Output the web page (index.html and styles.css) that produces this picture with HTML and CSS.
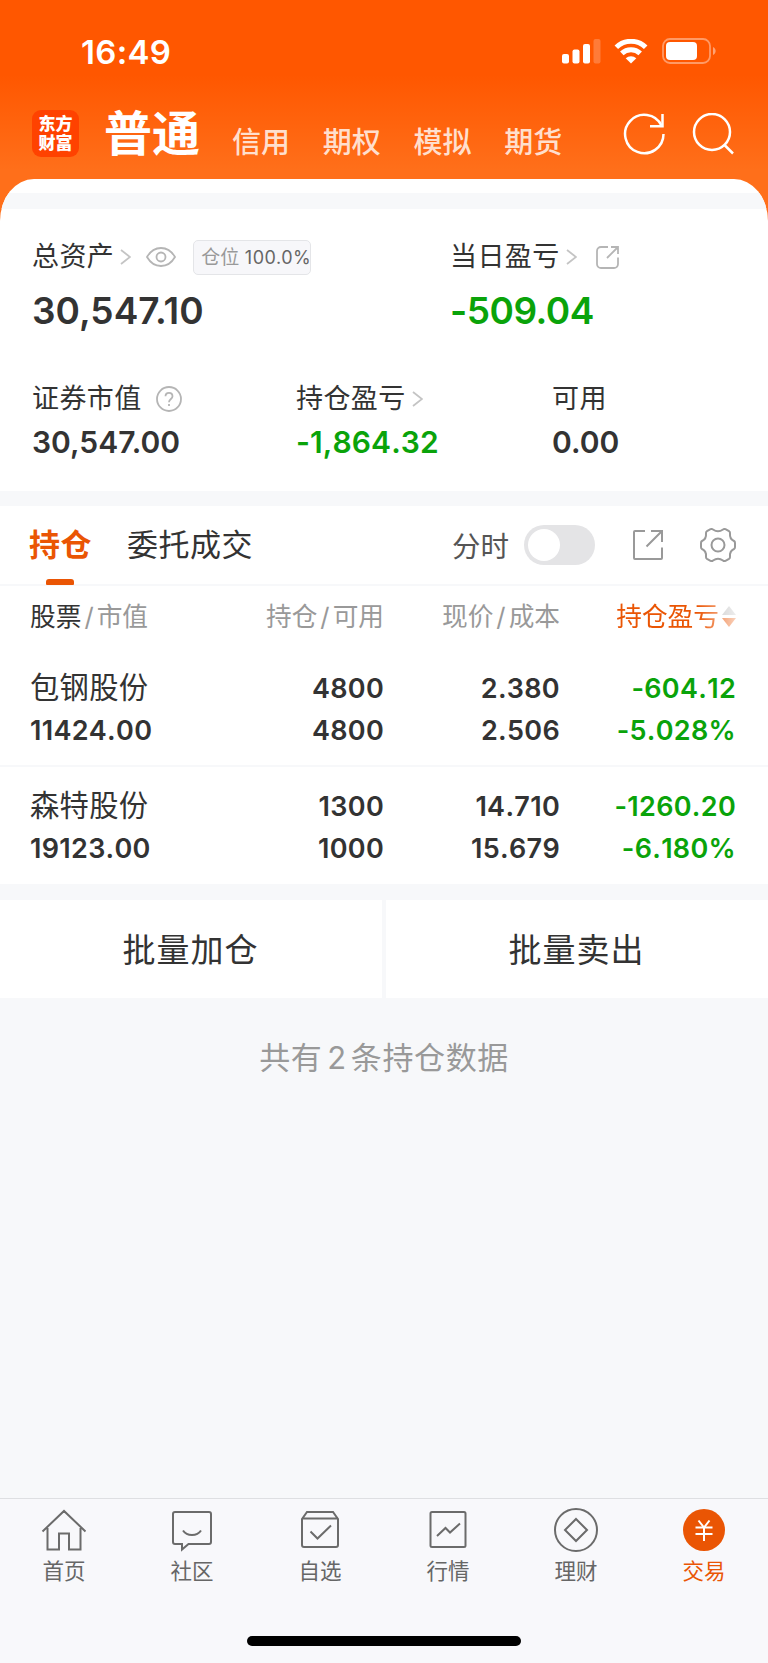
FILE: index.html
```
<!DOCTYPE html>
<html lang="zh-CN">
<head>
  <meta charset="UTF-8">
  <meta name="viewport" content="width=device-width, initial-scale=1.0">
  <title>东方财富 - 交易</title>
  <link rel="stylesheet" href="styles.css">
</head>
<body>
  <div class="app">
    <div class="status-bar">
      <span class="time">16:49</span>
      <div class="status-icons">
        <svg class="signal" width="39" height="25" viewBox="0 0 39 25" fill="#fff">
          <rect x="0" y="15" width="7" height="9.500" rx="2"/>
          <rect x="10.500" y="10.500" width="7" height="14" rx="2"/>
          <rect x="21" y="5" width="7" height="19.500" rx="2"/>
          <rect x="31.500" y="0" width="7" height="24.500" rx="2" opacity=".22"/>
        </svg>
        <svg class="wifi" width="34" height="25" viewBox="0 0 34 25" fill="none" stroke="#fff" stroke-width="5">
          <path d="M2.300 8.300a21 21 0 0 1 29.400 0"/>
          <path d="M7.800 14.400a13.200 13.200 0 0 1 18.400 0"/>
          <path d="M17 24.500l-5.300-5.200a7.600 7.600 0 0 1 10.600 0z" fill="#fff" stroke="none"/>
        </svg>
        <svg class="battery" width="54" height="26" viewBox="0 0 54 26">
          <rect x="1" y="1" width="47" height="24" rx="7" fill="none" stroke="#fff" stroke-width="1.800" opacity=".4"/>
          <rect x="4" y="4" width="31" height="18" rx="4" fill="#fff"/>
          <path d="M51 9c3.500 1.500 3.500 6.500 0 8z" fill="#fff" opacity=".45"/>
        </svg>
      </div>
    </div>

    <header class="nav">
      <div class="logo"><span>东方</span><span>财富</span></div>
      <h1>普通</h1>
      <nav class="nav-links">
        <a>信用</a>
        <a>期权</a>
        <a>模拟</a>
        <a>期货</a>
      </nav>
      <div class="nav-icons">
        <svg width="42" height="42" viewBox="0 0 42 42" fill="none" stroke="#fff" stroke-width="2.500">
          <path d="M40.500 21A19.200 19.200 0 1 1 38.500 12.500"/>
          <path d="M39.500 1v12.200H27"/>
        </svg>
        <svg width="42" height="42" viewBox="0 0 42 42" fill="none" stroke="#fff" stroke-width="2.500">
          <circle cx="20" cy="19" r="18"/>
          <path d="M32.500 32l8.500 8.500"/>
        </svg>
      </div>
    </header>

    <section class="assets">
      <div class="strip"></div>
      <div class="row row-main">
        <div class="item">
          <div class="label">
            <span>总资产</span>
            <svg class="chevron" width="11" height="16" viewBox="0 0 11 16"><path d="M1 1l9 7-9 7"/></svg>
            <svg class="eye" width="30" height="20" viewBox="0 0 30 20">
              <path d="M1 10C8-2 22-2 29 10C22 22 8 22 1 10z"/>
              <circle cx="15" cy="10" r="4.500"/>
            </svg>
            <span class="badge">仓位 <b>100.0%</b></span>
          </div>
          <div class="value">30,547.10</div>
        </div>
        <div class="item">
          <div class="label">
            <span>当日盈亏</span>
            <svg class="chevron" width="11" height="16" viewBox="0 0 11 16"><path d="M1 1l9 7-9 7"/></svg>
            <svg class="share-small" width="23" height="23" viewBox="0 0 23 23">
              <path d="M12 1H5a4 4 0 0 0-4 4v13a4 4 0 0 0 4 4h13a4 4 0 0 0 4-4v-6.500"/>
              <path d="M15 1h7v7M21.500 1.500L11 12"/>
            </svg>
          </div>
          <div class="value down">-509.04</div>
        </div>
      </div>
      <div class="row row-sub">
        <div class="item">
          <div class="label">
            <span>证券市值</span>
            <svg class="help" width="26" height="26" viewBox="0 0 26 26">
              <circle cx="13" cy="13" r="12"/>
              <path d="M9.500 10.300c0-4.600 7-4.600 7 0 0 2.700-3.500 2.700-3.500 6M13 18v2"/>
            </svg>
          </div>
          <div class="value">30,547.00</div>
        </div>
        <div class="item">
          <div class="label">
            <span>持仓盈亏</span>
            <svg class="chevron" width="11" height="16" viewBox="0 0 11 16"><path d="M1 1l9 7-9 7"/></svg>
          </div>
          <div class="value down">-1,864.32</div>
        </div>
        <div class="item">
          <div class="label"><span>可用</span></div>
          <div class="value">0.00</div>
        </div>
      </div>
    </section>

    <section class="positions">
      <div class="tabs">
        <a class="tab active">持仓</a>
        <a class="tab">委托成交</a>
        <div class="tools">
          <span>分时</span>
          <div class="switch"></div>
          <svg class="share" width="30" height="30" viewBox="0 0 30 30">
            <path d="M12 1H2a1 1 0 0 0-1 1v26a1 1 0 0 0 1 1h26a1 1 0 0 0 1-1V17.500"/>
            <path d="M18 1h11v11M28.500 1.500L13.500 16.500"/>
          </svg>
          <svg class="gear" width="36" height="36" viewBox="0 0 36 36">
            <path d="M13 2.500Q18 6 23 2.500Q24 1.500 25.500 2.200L29 4.200Q30.300 5 30 6.500Q29.500 12 34 14Q35 14.500 35 16V20Q35 21.500 34 22Q29.500 24 30 29.500Q30.300 31 29 31.800L25.500 33.800Q24 34.500 23 33.500Q18 30 13 33.500Q12 34.500 10.500 33.800L7 31.800Q5.700 31 6 29.500Q6.500 24 2 22Q1 21.500 1 20V16Q1 14.500 2 14Q6.500 12 6 6.500Q5.700 5 7 4.200L10.500 2.200Q12 1.500 13 2.500Z"/>
            <circle cx="18" cy="18" r="6.500"/>
          </svg>
        </div>
      </div>

      <div class="table">
        <div class="thead">
          <span><em>股票</em><i>/</i>市值</span>
          <span>持仓<i>/</i>可用</span>
          <span>现价<i>/</i>成本</span>
          <span class="sort">持仓盈亏
            <svg width="14" height="22" viewBox="0 0 14 22">
              <path d="M7 0l7 9H0z" fill="#bbb"/>
              <path d="M7 21l7-9H0z" fill="#ea5504"/>
            </svg>
          </span>
        </div>
        <div class="stock">
          <span class="name">包钢股份</span>
          <span>4800</span>
          <span>2.380</span>
          <span class="down">-604.12</span>
          <span>11424.00</span>
          <span>4800</span>
          <span>2.506</span>
          <span class="down">-5.028%</span>
        </div>
        <div class="stock">
          <span class="name">森特股份</span>
          <span>1300</span>
          <span>14.710</span>
          <span class="down">-1260.20</span>
          <span>19123.00</span>
          <span>1000</span>
          <span>15.679</span>
          <span class="down">-6.180%</span>
        </div>
      </div>
    </section>

    <div class="batch">
      <button>批量加仓</button>
      <button>批量卖出</button>
    </div>

    <p class="total">共有<span>2</span>条持仓数据</p>

    <footer class="tabbar">
      <div class="tabbar-items">
        <a>
          <svg width="46" height="46" viewBox="0 0 46 46">
            <path d="M1.500 24.500L23 4l21.500 20.500M6.500 21v21.500H18V26.500h10v16h11.500V21"/>
          </svg>
          <span>首页</span>
        </a>
        <a>
          <svg width="46" height="46" viewBox="0 0 46 46">
            <path d="M6 5h34a2 2 0 0 1 2 2v28a2 2 0 0 1-2 2H19.500L13 42.500V37H6a2 2 0 0 1-2-2V7a2 2 0 0 1 2-2z"/>
            <path d="M14 23.500c4 6 14 6 18 0"/>
          </svg>
          <span>社区</span>
        </a>
        <a>
          <svg width="46" height="46" viewBox="0 0 46 46">
            <path d="M5 12l5-7h26l5 7v26a2 2 0 0 1-2 2H7a2 2 0 0 1-2-2zM5 11.500h36"/>
            <path d="M13.500 24.500l7 7L34 18.500"/>
          </svg>
          <span>自选</span>
        </a>
        <a>
          <svg width="46" height="46" viewBox="0 0 46 46">
            <rect x="5.500" y="5" width="35" height="35" rx="1.500"/>
            <path d="M12 29l8.500-8 4.500 4.500 10-9"/>
          </svg>
          <span>行情</span>
        </a>
        <a>
          <svg width="46" height="46" viewBox="0 0 46 46">
            <circle cx="23" cy="23" r="21"/>
            <path d="M23 12l11 11-11 11-11-11z"/>
          </svg>
          <span>理财</span>
        </a>
        <a class="current">
          <svg width="46" height="46" viewBox="0 0 46 46">
            <circle class="disc" cx="23" cy="23" r="21"/>
            <path class="yen" d="M17.500 13.500L23 20.500l5.500-7M23 20.500V34M14.500 20.500h17M14.500 27h17"/>
          </svg>
          <span>交易</span>
        </a>
      </div>
      <div class="home-indicator"></div>
    </footer>
  </div>
</body>
</html>
```

FILE: styles.css
```
* {
  box-sizing: border-box;
}

body {
  margin: 0;
  font-family: Inter, "Noto Sans CJK SC", sans-serif;
  color: #333;
}

.app {
  display: flex;
  flex-direction: column;
  height: 1663px;
  background: linear-gradient(#ff5700 0, #ff5700 75px, #ff6f1a 170px, #ff6f1a 100%) no-repeat 0 0 / 100% 240px #f7f8fa;
}

svg {
  display: block;
  flex: none;
}

/* status bar */
.status-bar {
  display: flex;
  justify-content: space-between;
  height: 102px;
  padding: 31px 52px 0 81px;
}

.time {
  font-size: 33px;
  font-weight: 600;
  letter-spacing: .3px;
  line-height: 42px;
  color: #fff;
}

.status-icons {
  display: flex;
  align-items: flex-start;
  padding-top: 8px;
}

.wifi {
  margin: 0 14px 0 13px;
}

.battery {
  margin-top: -1px;
}

/* header */
.nav {
  display: flex;
  height: 77px;
  padding: 0 34px 0 32px;
}

.logo {
  display: flex;
  flex-direction: column;
  align-items: center;
  justify-content: center;
  width: 47px;
  height: 47px;
  margin-top: 8px;
  border-radius: 9px;
  background: #ff4200;
  color: #fff;
  font-size: 17px;
  font-weight: 900;
  line-height: 19px;
}

.nav h1 {
  margin: 0 0 0 25px;
  font-size: 48px;
  font-weight: 700;
  line-height: 64px;
  color: #fff;
}

.nav-links {
  display: flex;
  gap: 32.7px;
  margin-left: 32px;
  font-size: 29px;
  font-weight: 500;
  line-height: 81px;
  color: #ffdfcd;
}

.nav-icons {
  display: flex;
  gap: 27px;
  margin: 11px 0 0 auto;
}

/* assets */
.assets {
  height: 312px;
  border-radius: 34px 34px 0 0 / 42px 42px 0 0;
  background: #fff;
  overflow: hidden;
}

.strip {
  height: 16px;
  margin-top: 14px;
  background: #f7f8fa;
}

.row {
  display: grid;
  padding-left: 32px;
}

.row-main {
  grid-template-columns: 418px 1fr;
  padding-top: 28px;
}

.row-sub {
  grid-template-columns: 264px 256px 1fr;
  padding-top: 45px;
}

.label {
  display: flex;
  align-items: center;
  height: 40px;
  font-size: 27px;
  line-height: 40px;
  letter-spacing: .4px;
}

.label svg {
  fill: none;
  stroke: #b5b5b5;
  stroke-width: 1.8;
}

.label .chevron {
  margin-left: 6px;
  stroke: #c4c4c4;
}

.label .eye {
  margin-left: 15px;
}

.label .share-small {
  margin-left: 19px;
}

.label .help {
  margin-left: 14px;
}

.badge {
  height: 35px;
  width: 118px;
  margin-left: 17px;
  padding-left: 7px;
  border: 1px solid #e4e5e8;
  border-radius: 5px;
  background: #f7f7fa;
  color: #999;
  font-size: 19px;
  line-height: 33px;
  letter-spacing: .1px;
  white-space: nowrap;
}

.badge b {
  font-size: 18px;
  font-weight: 400;
  letter-spacing: .5px;
  color: #666;
}

.value {
  font-weight: 600;
}

.row-main .value {
  font-size: 37px;
  line-height: 46px;
  margin-top: 11px;
}

.row-main .down {
  letter-spacing: -.5px;
}

.row-sub .value {
  font-size: 30px;
  line-height: 40px;
  margin-top: 3px;
}

.row-sub .down {
  font-kerning: none;
  letter-spacing: .1px;
}

.down {
  color: #0aa30a;
}

/* positions */
.positions {
  margin-top: 15px;
  background: #fff;
}

.tabs {
  display: flex;
  align-items: center;
  height: 80px;
  padding: 0 32px 0 29px;
  border-bottom: 2px solid #f7f8fa;
}

.tab {
  position: relative;
  margin-right: 36px;
  font-size: 31px;
  letter-spacing: .5px;
  line-height: 80px;
}

.tab.active {
  margin-right: 35px;
  font-weight: 700;
  color: #ea5504;
}

.tab.active::after {
  content: "";
  position: absolute;
  left: 17px;
  bottom: 0;
  width: 28px;
  height: 6px;
  border-radius: 3px 3px 1px 1px;
  background: #ea5504;
}

.tools {
  display: flex;
  align-items: center;
  margin-left: auto;
  color: #555;
  font-size: 28.5px;
}

.tools span {
  margin-top: -2px;
}

.tools svg {
  fill: none;
  stroke: #999;
  stroke-width: 2;
}

.switch {
  width: 71px;
  height: 40px;
  margin: 0 38px 0 15px;
  padding: 4px;
  border-radius: 20px;
  background: #e4e4e6;
}

.switch::before {
  content: "";
  display: block;
  width: 32px;
  height: 32px;
  border-radius: 50%;
  background: #fff;
}

.gear {
  margin-left: 37px;
}

.thead,
.stock {
  display: grid;
  grid-template-columns: 170px 184px 176px 1fr;
  padding: 0 32px 0 30px;
  text-align: right;
}

.thead {
  height: 74px;
  padding-top: 13px;
  font-size: 25.7px;
  line-height: 36px;
  color: #999;
  white-space: nowrap;
}

.thead i {
  margin: 0 3px;
  font-style: normal;
}

.thead em {
  font-style: normal;
  color: #333;
}

.thead span:first-child,
.stock span:nth-child(4n + 1) {
  text-align: left;
}

.thead .sort {
  display: flex;
  align-items: center;
  justify-content: flex-end;
  height: 36px;
  gap: 3px;
  color: #ea5504;
  -webkit-mask-image: linear-gradient(to right, #000 78%, transparent 108%);
  mask-image: linear-gradient(to right, #000 78%, transparent 108%);
}

.stock {
  height: 105px;
  padding-top: 7px;
  grid-template-rows: 42px 43px;
  font-size: 27px;
  font-weight: 600;
  font-kerning: none;
  letter-spacing: .3px;
  line-height: 43px;
}

.stock + .stock {
  height: 119px;
  border-top: 2px solid #f7f8fa;
  padding-top: 18px;
}

.stock .name {
  margin-top: -1px;
  font-size: 29.3px;
  font-weight: 400;
}

.batch {
  display: flex;
  gap: 4px;
  margin-top: 16px;
}

.batch button {
  flex: 1;
  height: 98px;
  padding: 0 1px 2px 0;
  border: 0;
  background: #fff;
  color: #333;
  font-family: inherit;
  font-size: 33px;
  letter-spacing: 1px;
}

.total {
  margin: 38px 0 0;
  text-align: center;
  font-size: 31px;
  letter-spacing: .6px;
  line-height: 44px;
  color: #999;
}

.total span {
  margin: 0 4px 0 5px;
}

/* bottom tab bar */
.tabbar {
  margin-top: auto;
  height: 165px;
  border-top: 1px solid #dedfe2;
  background: #f8f8fb;
}

.tabbar-items {
  display: flex;
  height: 137px;
  padding-top: 8px;
}

.tabbar a {
  flex: 1;
  display: flex;
  flex-direction: column;
  align-items: center;
  font-size: 21.5px;
  line-height: 36px;
  color: #666;
}

.tabbar svg {
  fill: none;
  stroke: #6b6b6b;
  stroke-width: 2;
}

.tabbar .current {
  color: #ea5504;
}

.tabbar .disc {
  fill: #ea5504;
  stroke: none;
}

.tabbar .yen {
  stroke: #fff;
}

.home-indicator {
  width: 274px;
  height: 10px;
  margin: 0 auto;
  border-radius: 5px;
  background: #000;
}
```
